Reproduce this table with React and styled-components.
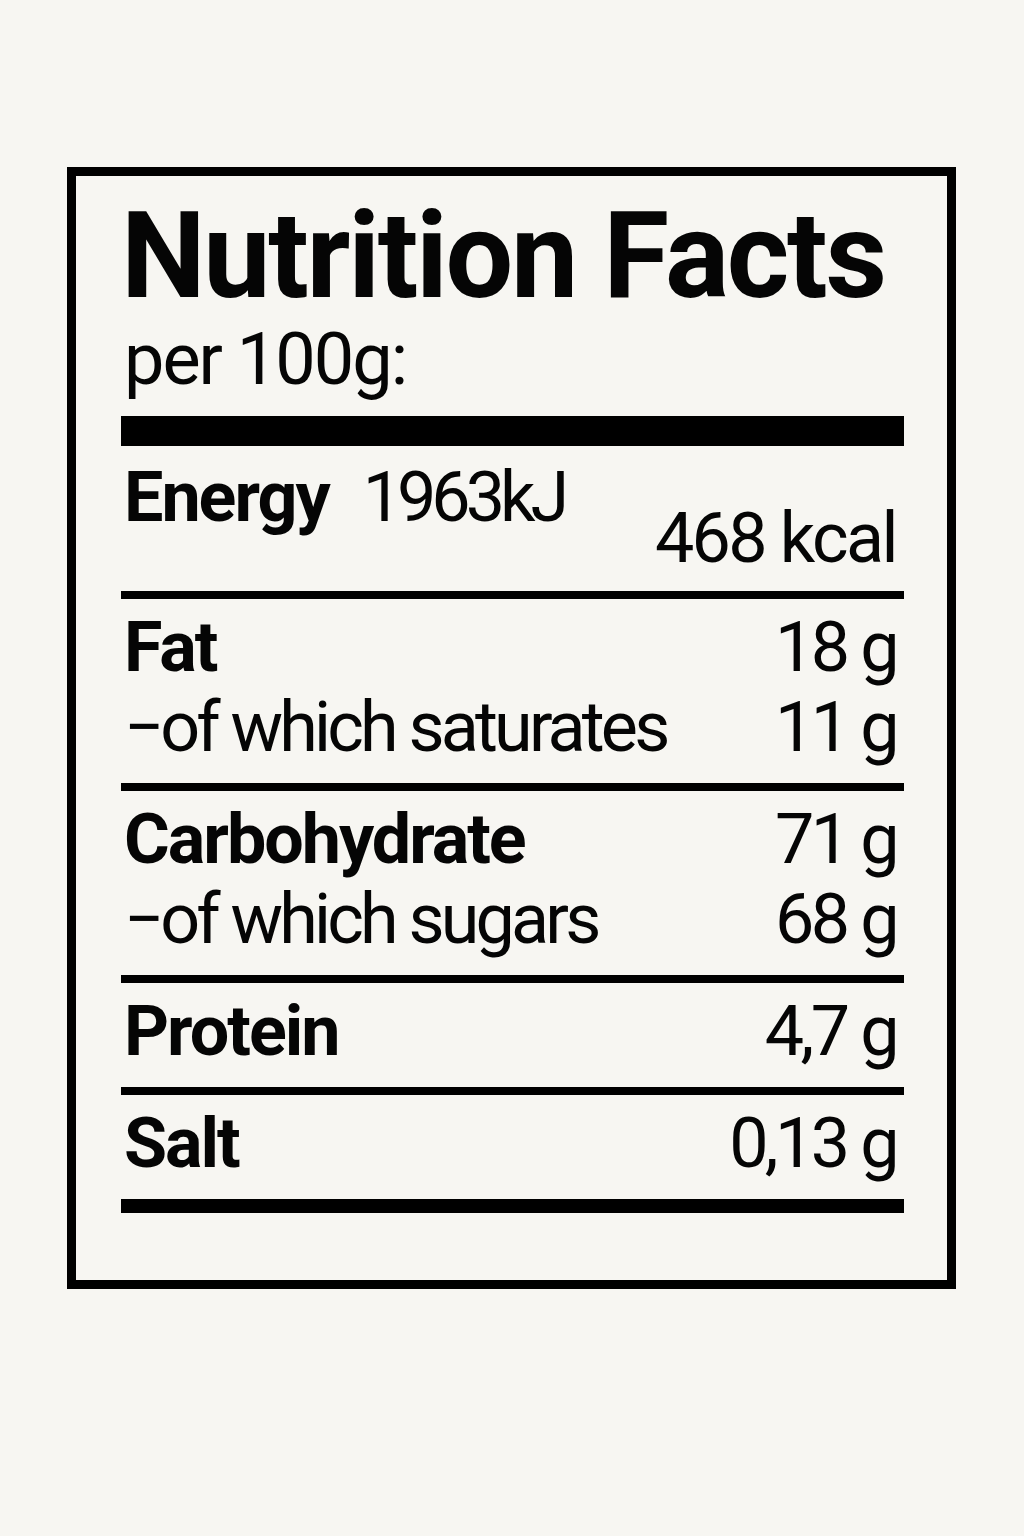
import React from 'react';
import styled, { createGlobalStyle } from 'styled-components';

const GlobalStyle = createGlobalStyle`
  html, body {
    margin: 0;
    padding: 0;
    background: #f7f6f2;
  }
  body {
    font-family: Roboto, "Liberation Sans", sans-serif;
    color: #050505;
  }
`;

const nutrients = [
  {
    rows: [
      { label: 'Fat', value: '18 g', main: true },
      { label: '−of which saturates', value: '11 g' },
    ],
  },
  {
    rows: [
      { label: 'Carbohydrate', value: '71 g', main: true },
      { label: '−of which sugars', value: '68 g' },
    ],
  },
  { rows: [{ label: 'Protein', value: '4,7 g', main: true }] },
  { rows: [{ label: 'Salt', value: '0,13 g', main: true }] },
];

const App = () => {
  return (
    <>
      <GlobalStyle />
      <Page>
        <Label>
          <Title>Nutrition Facts</Title>
          <Subtitle>per 100g:</Subtitle>
          <Bar thickness={30} />
          <EnergySection>
            <EnergyLeft>
              <RowLabel main>Energy</RowLabel>
              <RowValue tight>1963kJ</RowValue>
            </EnergyLeft>
            <Kcal>468 kcal</Kcal>
          </EnergySection>
          {nutrients.map((group, i) => (
            <React.Fragment key={i}>
              <Bar thickness={8} />
              <Section>
                {group.rows.map((row) => (
                  <Row key={row.label}>
                    <RowLabel main={row.main}>{row.label}</RowLabel>
                    <RowValue>{row.value}</RowValue>
                  </Row>
                ))}
              </Section>
            </React.Fragment>
          ))}
          <Bar thickness={14} />
        </Label>
      </Page>
    </>
  );
};

const Page = styled.div`
  width: 1024px;
  min-height: 1536px;
  padding-top: 167px;
  box-sizing: border-box;
`;

const Label = styled.div`
  margin-left: 67px;
  width: 889px;
  box-sizing: border-box;
  border: 9px solid #000;
  padding: 20px 43px 67px 45px;
`;

const Title = styled.h1`
  margin: 0 0 4px;
  font-size: 120px;
  line-height: 120px;
  font-weight: 700;
  letter-spacing: -2.3px;
  white-space: nowrap;
`;

const Subtitle = styled.div`
  font-size: 72px;
  line-height: 80px;
  font-weight: 400;
  padding-left: 3px;
  letter-spacing: -2px;
  margin-bottom: 16px;
`;

const Bar = styled.div`
  height: ${(p) => p.thickness}px;
  background: #000;
`;

const EnergySection = styled.div`
  display: flex;
  justify-content: space-between;
  align-items: flex-start;
  padding: 11px 8px 13px 3px;
`;

const EnergyLeft = styled.div`
  display: flex;
  gap: 34px;
  line-height: 80px;
`;

const Kcal = styled.div`
  font-size: 70px;
  line-height: 80px;
  padding-top: 41px;
  letter-spacing: -2.6px;
`;

const Section = styled.div`
  padding: 8px 0 16px;
`;

const Row = styled.div`
  display: flex;
  justify-content: space-between;
  align-items: baseline;
  height: 80px;
  padding: 0 8px 0 3px;
`;

const RowLabel = styled.span`
  font-size: 70px;
  line-height: 80px;
  font-weight: ${(p) => (p.main ? 700 : 400)};
  letter-spacing: ${(p) => (p.main ? '-2px' : '-3.8px')};
  white-space: nowrap;
`;

const RowValue = styled.span`
  font-size: 70px;
  line-height: 80px;
  font-weight: 400;
  letter-spacing: ${(p) => (p.tight ? '-5px' : '-3.6px')};
  white-space: nowrap;
`;

export default App;
